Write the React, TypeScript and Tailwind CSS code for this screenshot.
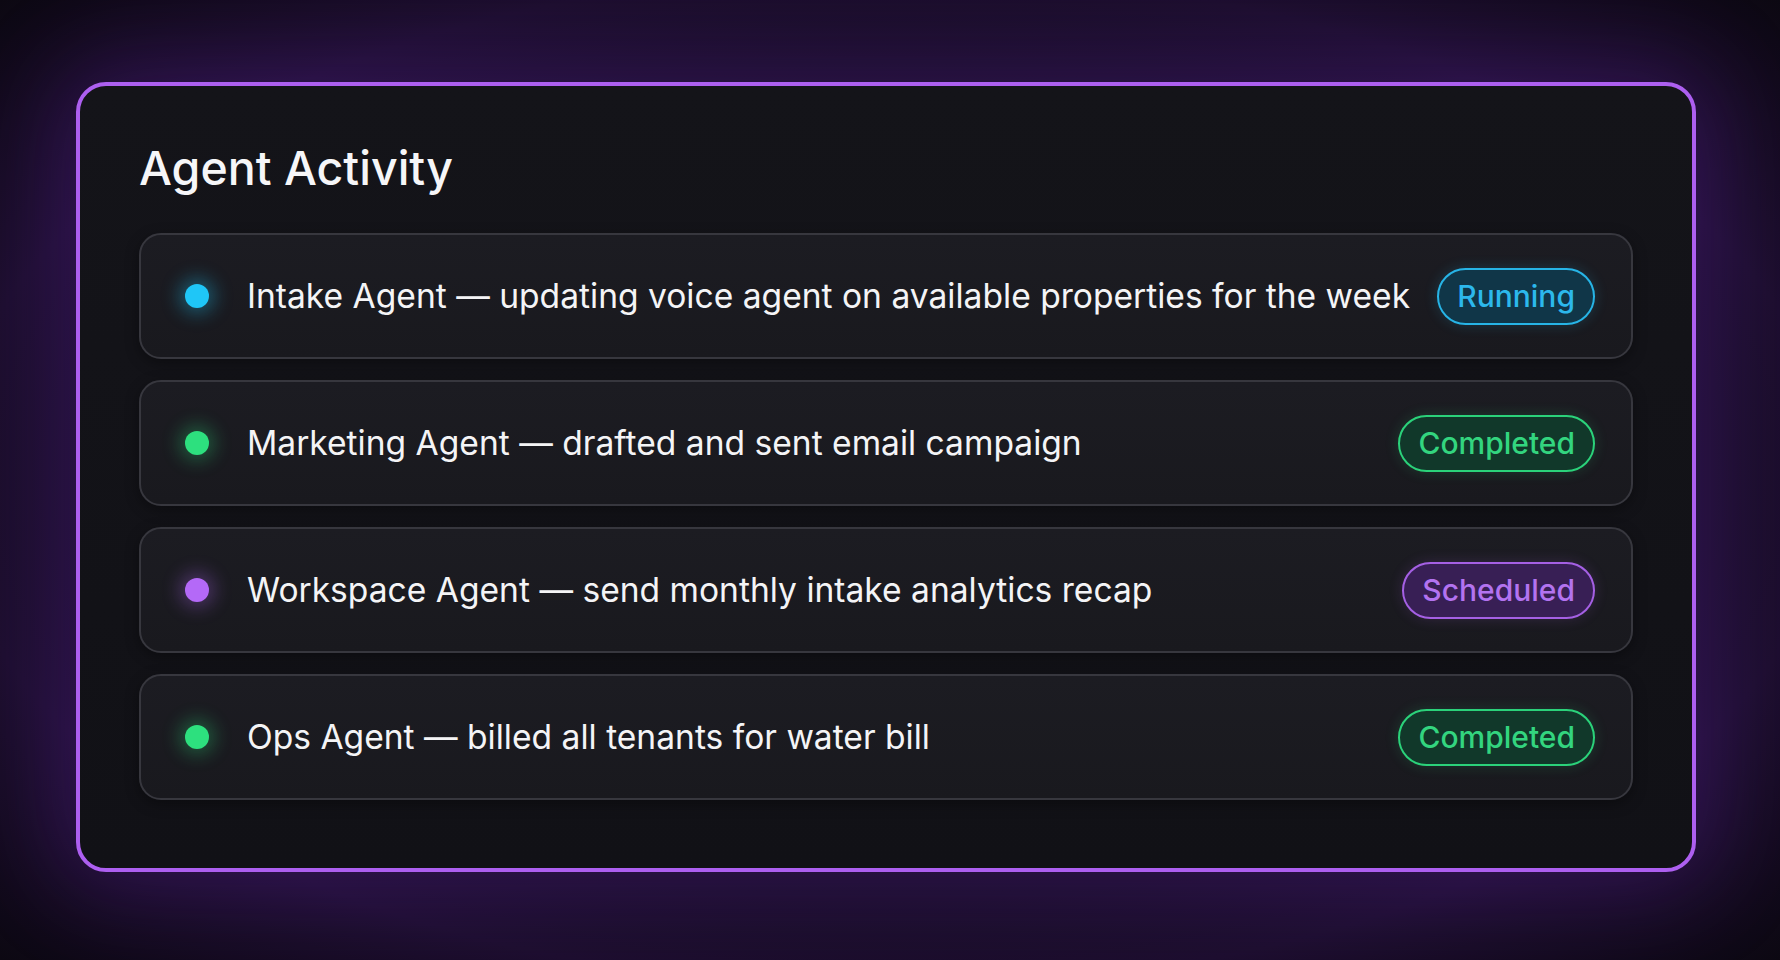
const rows = [
  {
    text: "Intake Agent — updating voice agent on available properties for the week",
    status: "Running",
    dot: "bg-[#1fc6f7] shadow-[0_0_18px_6px_rgba(31,198,247,0.35)]",
    badge: "border-[#27b4e6] bg-[#103648] text-[#2cb8ec] shadow-[0_0_14px_rgba(39,180,230,0.2)]",
  },
  {
    text: "Marketing Agent — drafted and sent email campaign",
    status: "Completed",
    dot: "bg-[#2de07e] shadow-[0_0_18px_6px_rgba(45,224,126,0.3)]",
    badge: "border-[#2bd27a] bg-[#11382a] text-[#33d57f] shadow-[0_0_14px_rgba(43,210,122,0.18)]",
  },
  {
    text: "Workspace Agent — send monthly intake analytics recap",
    status: "Scheduled",
    dot: "bg-[#b469f7] shadow-[0_0_18px_6px_rgba(180,105,247,0.3)]",
    badge: "border-[#a560e4] bg-[#381f55] text-[#b373f0] shadow-[0_0_14px_rgba(165,96,228,0.18)]",
  },
  {
    text: "Ops Agent — billed all tenants for water bill",
    status: "Completed",
    dot: "bg-[#2de07e] shadow-[0_0_18px_6px_rgba(45,224,126,0.3)]",
    badge: "border-[#2bd27a] bg-[#11382a] text-[#33d57f] shadow-[0_0_14px_rgba(43,210,122,0.18)]",
  },
];

export default function App() {
  return (
    <div
      className="w-[1780px] h-[960px] flex items-center justify-center pr-[8px] pb-[6px] bg-[radial-gradient(ellipse_at_center,#0d0b14_35%,#1c0e2d_75%,#0c0812_100%)]"
      style={{ fontFamily: "Inter, 'Noto Sans', sans-serif" }}
    >
      <div className="w-[1620px] h-[790px] rounded-[30px] border-4 border-[#ad5ff0] bg-[linear-gradient(180deg,#141419,#111116)] px-[59px] pt-[53px] shadow-[0_0_90px_20px_rgba(110,40,190,0.28)]">
        <h1 className="text-[46.5px] leading-[58px] font-medium text-[#f6f6f8] mb-[36px]">
          Agent Activity
        </h1>
        <div className="flex flex-col gap-[21px]">
          {rows.map((r, i) => (
            <div
              key={i}
              className="h-[126px] flex items-center rounded-[22px] border-2 border-[#37373e] bg-[linear-gradient(180deg,#1c1c22,#19191e)] pl-[44px] pr-[36px] shadow-[0_4px_14px_rgba(0,0,0,0.35)]"
            >
              <span className={`w-[24px] h-[24px] rounded-full shrink-0 ${r.dot}`} />
              <span className="ml-[38px] text-[33.6px] leading-none text-[#f4f4f6] whitespace-nowrap">
                {r.text}
              </span>
              <span
                className={`ml-auto h-[57px] flex items-center rounded-full border-2 px-[18px] text-[30px] font-medium leading-none ${r.badge}`}
              >
                {r.status}
              </span>
            </div>
          ))}
        </div>
      </div>
    </div>
  );
}
